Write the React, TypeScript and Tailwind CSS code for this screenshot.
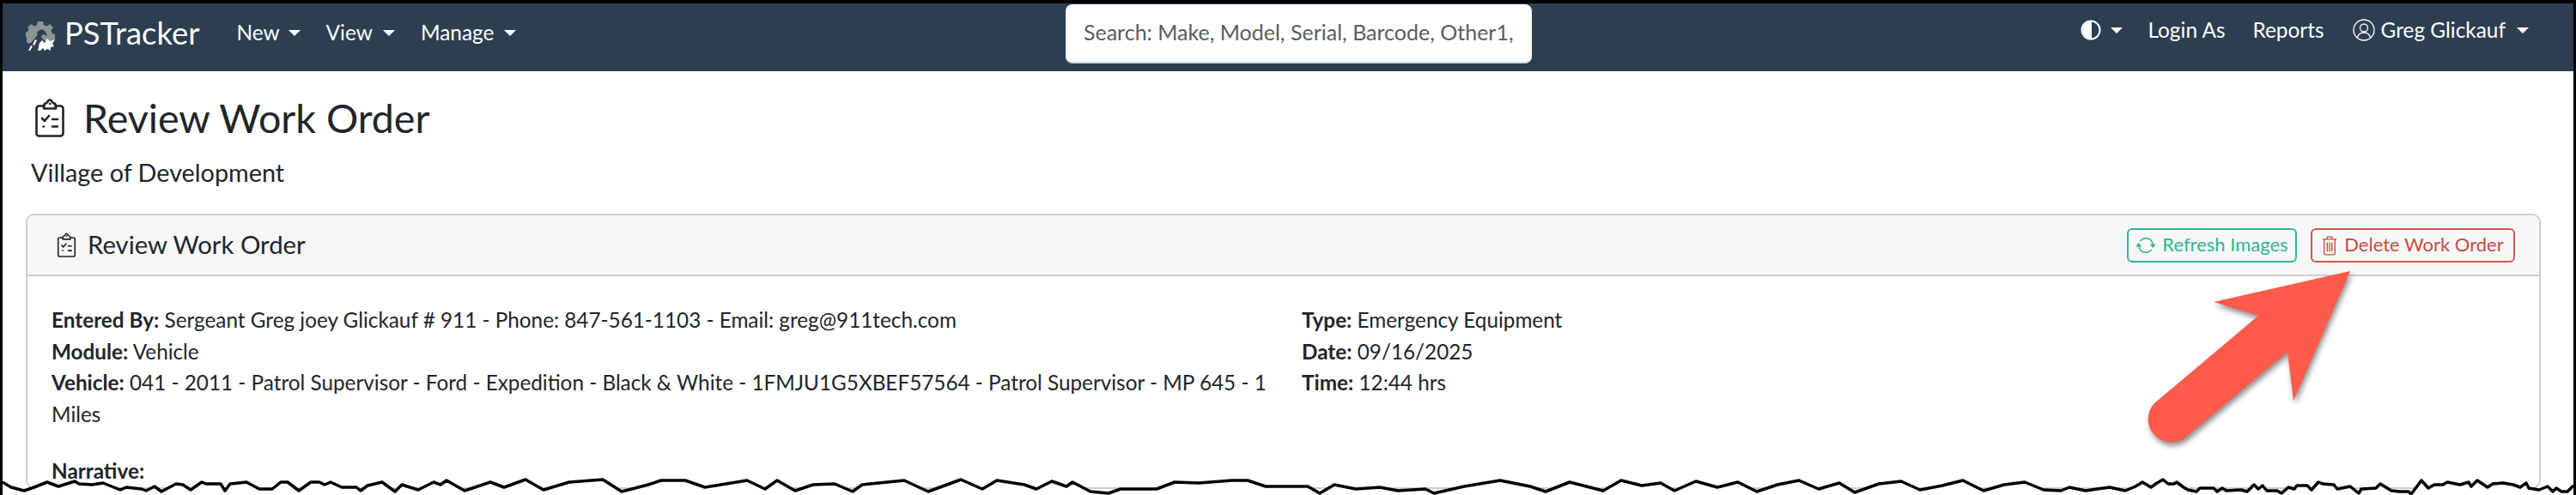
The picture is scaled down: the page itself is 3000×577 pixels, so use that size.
import { BsArrowRepeat } from 'react-icons/bs';

const tornEdge =
  '3,562 13,568 28,572 37,569 55,562 68,567 87,561 92,564 107,565 120,563 140,571 147,568 165,570 170,572 180,567 188,573 205,564 213,565 222,571 235,562 240,564 257,564 262,572 268,564 287,562 302,570 317,570 327,562 335,562 348,572 362,562 372,562 378,565 385,562 398,568 415,568 420,572 428,566 445,562 460,573 468,565 487,571 505,562 513,565 520,560 541,572 571,562 587,568 612,559 633,571 663,562 702,559 724,573 755,565 770,560 798,560 821,568 870,560 891,570 905,560 926,572 947,565 972,564 993,573 1004,565 1053,560 1081,573 1119,559 1144,570 1161,560 1193,565 1207,570 1225,561 1242,567 1249,562 1270,573 1291,575 1305,570 1347,570 1368,562 1396,563 1435,560 1453,560 1474,567 1523,567 1537,575 1554,565 1579,570 1607,568 1628,572 1660,570 1670,575 1705,567 1747,560 1782,567 1800,573 1828,562 1867,572 1888,560 1912,566 1934,563 1950,572 1975,561 2000,568 2024,562 2046,573 2070,565 2095,560 2118,570 2142,563 2160,574 2188,564 2214,561 2236,571 2262,566 2286,560 2310,572 2334,565 2358,562 2380,571 2400,572 2410,568 2429,572 2442,570 2457,568 2475,572 2487,567 2495,562 2505,568 2512,563 2519,559 2525,564 2532,564 2535,562 2543,568 2548,571 2558,573 2562,569 2578,569 2582,573 2588,569 2593,572 2610,571 2617,573 2625,565 2630,570 2635,566 2640,572 2652,572 2657,575 2665,568 2672,570 2675,566 2687,566 2692,571 2700,562 2705,564 2718,565 2722,570 2737,567 2747,575 2750,570 2767,569 2772,564 2785,572 2795,573 2805,573 2808,576 2820,560 2828,569 2835,565 2845,565 2850,562 2865,565 2875,562 2878,567 2885,560 2897,568 2903,564 2915,563 2927,565 2935,568 2942,563 2945,569 2957,571 2967,567 2973,573 2977,569 2983,573 2990,573 2997,566';

function Caret() {
  return <span className="block h-0 w-0 border-x-[7px] border-t-[7px] border-x-transparent border-t-white" />;
}

function ClipboardIcon({ className }: { className: string }) {
  return (
    <svg viewBox="0 0 34 46" fill="none" stroke="currentColor" strokeWidth="2.6" strokeLinecap="round" strokeLinejoin="round" className={className}>
      <path d="M10.5 9.5H4.5a3 3 0 0 0-3 3V41.5a3 3 0 0 0 3 3h25a3 3 0 0 0 3-3V12.5a3 3 0 0 0-3-3h-6" />
      <path d="M10 12.5v-3c0-2 1.5-3 3-3.5 1-.4 1.5-1 2-2.500.4-1.200 3.600-1.200 4 0 .5 1.500 1 2.100 2 2.500 1.500.5 3 1.500 3 3.500v3z" />
      <path d="M8 24l3 3 5-6M20 25h6M20 33.500h6" />
      <path d="M9.500 33.500h.5M17 7h.2" />
    </svg>
  );
}

function Logo() {
  return (
    <svg viewBox="0 0 34 34" className="mt-[8px] h-[34px] w-[34px] shrink-0">
      <path
        fill="#8e9396"
        d="M14 0h6l1 4 3.500 1.500L28 3l4 4-2.500 3.500L31 14l3 1v6l-4 1-1 3-8-3-6-8-8 10-3 2-3-2v-6l-3-1v-4l4-1 1.500-3.500L2 7l4-4 3.500 2.500L13 4z"
      />
      <path fill="#2c3e50" d="M13 12l6-3 4 3 2 5-5-2-4 4-3 5-2-3 3-4z" />
      <path fill="#ffffff" d="M14 34l2-9 3-3 3 3 3-5 3 3 6-2-3 5 2 3-4 1v4l-4-2-3 2-2-3-3 3zM3 34l3-6 2 1-3 5zM8 27l3-6 2 1-3 6z" />
    </svg>
  );
}

function InfoLine({ label, children }: { label: string; children: string }) {
  return (
    <p>
      <span className="font-bold">{label}</span> {children}
    </p>
  );
}

export default function App() {
  return (
    <div className="relative h-[577px] w-[3000px] overflow-hidden bg-black px-[3px] pt-1 font-['Lato',sans-serif] text-[#212529]">
      <div className="h-full bg-white">
        {/* Navbar */}
        <nav className="flex h-[79px] items-start bg-[#2c3e50] pl-[27px] pr-[52px] text-[24.4px] leading-[36px] text-white">
          <div className="mt-[13px] flex w-[1211px] items-center">
            <Logo />
            <span className="ml-[11px] text-[36.4px] leading-[36px]">PSTracker</span>
            <span className="ml-[43px]">New</span>
            <span className="ml-[10px]"><Caret /></span>
            <span className="ml-[30px]">View</span>
            <span className="ml-[12px]"><Caret /></span>
            <span className="ml-[30px]">Manage</span>
            <span className="ml-[12px]"><Caret /></span>
          </div>
          <input
            readOnly
            placeholder="Search: Make, Model, Serial, Barcode, Other1,"
            className="mt-[1px] h-[69px] w-[543px] rounded-lg border-b-2 border-[#ced4da] bg-white px-[21px] pb-1 text-[25px] outline-none placeholder:text-[#595c5f]"
          />
          <div className="ml-auto mt-[13px] flex items-center">
            <svg viewBox="0 0 24 24" className="h-[24px] w-[24px]">
              <circle cx="12" cy="12" r="10.500" fill="#2c3e50" stroke="#fff" strokeWidth="2" />
              <path d="M13 1.500a10.500 10.500 0 0 0 0 21z" fill="#fff" />
            </svg>
            <span className="ml-[11px]"><Caret /></span>
            <span className="ml-[29px]">Login As</span>
            <span className="ml-[32px]">Reports</span>
            <svg viewBox="0 0 26 26" fill="none" stroke="#fff" strokeWidth="1.300" className="ml-[33px] h-[26px] w-[26px]">
              <circle cx="13" cy="13" r="12" />
              <circle cx="13" cy="10.500" r="4.500" />
              <path d="M5.500 22c1-4.500 3.500-6 7.500-6s6.500 1.500 7.500 6" />
            </svg>
            <span className="ml-[7px]">Greg Glickauf</span>
            <span className="ml-[13px]"><Caret /></span>
          </div>
        </nav>

        {/* Page heading */}
        <div className="pl-[33px] pt-[26px]">
          <div className="flex items-center pl-[5px]">
            <ClipboardIcon className="h-[46px] w-[34px]" />
            <h1 className="ml-[22px] text-[46.6px] leading-[56px]">Review Work Order</h1>
          </div>
          <p className="mt-[18px] text-[28.8px] leading-[36px]">Village of Development</p>
        </div>

        {/* Card */}
        <div className="ml-[27px] mt-[30px] w-[2929px] rounded-[10px] border-2 border-[#cfcfcf] text-[24.3px] leading-[36.5px]">
          <div className="flex h-[71px] items-center rounded-t-[8px] border-b-2 border-[#cfcfcf] bg-[#f7f7f7] pl-[34px] pr-[28px]">
            <ClipboardIcon className="h-[29px] w-[23px]" />
            <span className="ml-[13px] text-[29.3px]">Review Work Order</span>
            <button className="ml-auto flex h-[40px] w-[198px] items-center justify-center gap-[7px] rounded-md border-2 border-[#2fb5a0] text-[22px] text-[#2fb594]">
              <BsArrowRepeat className="h-[24px] w-[24px]" />
              Refresh Images
            </button>
            <button className="ml-[16px] flex h-[40px] w-[238px] items-center justify-center gap-[8px] rounded-md border-2 border-[#cc5a54] text-[22px] text-[#c94a44]">
              <svg viewBox="0 0 20 26" fill="none" stroke="currentColor" strokeWidth="1.500" className="h-[24px] w-[18px]">
                <path d="M1 5h18M7 5V2h6v3M3 5v18a2 2 0 0 0 2 2h10a2 2 0 0 0 2-2V5M7 9v12M10 9v12M13 9v12" />
              </svg>
              Delete Work Order
            </button>
          </div>
          <div className="grid grid-cols-[1456px_1fr] pl-[28px] pt-[33px]">
            <div className="pr-[24px]">
              <InfoLine label="Entered By:">Sergeant Greg joey Glickauf # 911 - Phone: 847-561-1103 - Email: greg@911tech.com</InfoLine>
              <InfoLine label="Module:">Vehicle</InfoLine>
              <InfoLine label="Vehicle:">041 - 2011 - Patrol Supervisor - Ford - Expedition - Black &amp; White - 1FMJU1G5XBEF57564 - Patrol Supervisor - MP 645 - 1 Miles</InfoLine>
            </div>
            <div>
              <InfoLine label="Type:">Emergency Equipment</InfoLine>
              <InfoLine label="Date:">09/16/2025</InfoLine>
              <InfoLine label="Time:">12:44 hrs</InfoLine>
            </div>
          </div>
          <p className="mt-[30px] pl-[28px] font-bold">Narrative:</p>
        </div>
      </div>

      {/* Callout arrow */}
      <svg viewBox="0 0 3000 577" className="pointer-events-none absolute left-0 top-0 h-[577px] w-[3000px] drop-shadow-[2px_4px_3px_rgba(0,0,0,0.45)]">
        <path fill="#ff5a4a" d="M2737 316L2578 352L2630 368L2509 470A27 27 0 0 0 2545 510L2664 410L2671 467Z" />
      </svg>

      {/* Torn bottom edge */}
      <svg viewBox="0 0 3000 577" className="pointer-events-none absolute left-0 top-0 h-[577px] w-[3000px]">
        <polygon fill="#ffffff" points={`${tornEdge} 2997,577 3,577`} />
        <polyline fill="none" stroke="#000000" strokeWidth="3.5" strokeLinejoin="round" points={tornEdge} />
      </svg>
    </div>
  );
}
